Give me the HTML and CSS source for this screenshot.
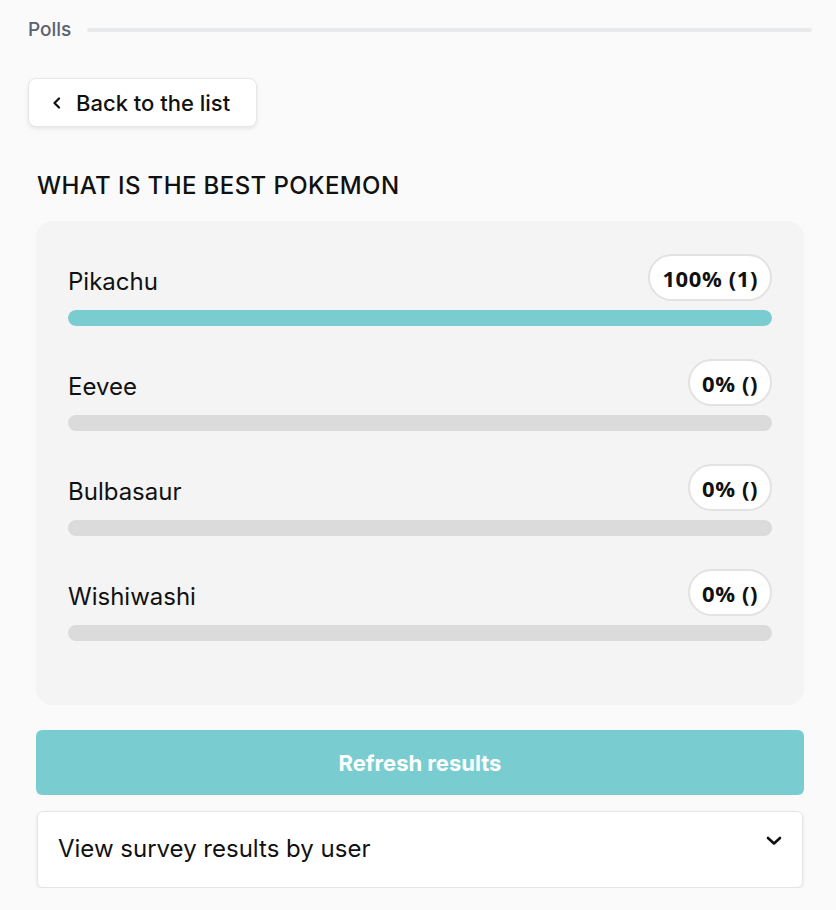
FILE: index.html
```html
<!DOCTYPE html>
<html lang="en">
<head>
    <meta charset="UTF-8">
    <meta name="viewport" content="width=device-width, initial-scale=1.0">
    <title>Polls</title>
    <link rel="stylesheet" href="styles.css">
</head>
<body>
    <div class="page">
        <div class="section-title">
            <span>Polls</span>
            <div class="rule"></div>
        </div>

        <button class="back-button">
            <svg width="10" height="12" viewBox="0 0 10 12"><path d="M7 1.5 L2.5 6 L7 10.5" fill="none" stroke="#111" stroke-width="2.2" stroke-linecap="round" stroke-linejoin="round"/></svg>
            Back to the list
        </button>

        <h1 class="poll-title">WHAT IS THE BEST POKEMON</h1>

        <div class="results-card">
            <div class="option">
                <div class="option-head">
                    <span class="option-name">Pikachu</span>
                    <span class="pill">100% (1)</span>
                </div>
                <div class="bar"><div class="bar-fill" style="width: 100%"></div></div>
            </div>
            <div class="option">
                <div class="option-head">
                    <span class="option-name">Eevee</span>
                    <span class="pill">0% ()</span>
                </div>
                <div class="bar"><div class="bar-fill" style="width: 0%"></div></div>
            </div>
            <div class="option">
                <div class="option-head">
                    <span class="option-name">Bulbasaur</span>
                    <span class="pill">0% ()</span>
                </div>
                <div class="bar"><div class="bar-fill" style="width: 0%"></div></div>
            </div>
            <div class="option">
                <div class="option-head">
                    <span class="option-name">Wishiwashi</span>
                    <span class="pill">0% ()</span>
                </div>
                <div class="bar"><div class="bar-fill" style="width: 0%"></div></div>
            </div>
        </div>

        <button class="refresh-button">Refresh results</button>

        <div class="user-results">
            <span>View survey results by user</span>
            <svg width="16" height="10" viewBox="0 0 16 10"><path d="M2 2 L8 7.5 L14 2" fill="none" stroke="#111" stroke-width="2.6" stroke-linecap="round" stroke-linejoin="round"/></svg>
        </div>
    </div>
</body>
</html>
```

FILE: styles.css
```css
* { margin: 0; padding: 0; box-sizing: border-box; }

body {
    font-family: Inter, "Noto Sans", sans-serif;
    background: #fafafa;
    color: #111;
}

.page {
    width: 836px;
    padding: 17px 24px 0 28px;
}

.section-title {
    display: flex;
    align-items: center;
    gap: 16px;
    height: 24px;
    color: #5b6270;
    font-size: 19px;
    font-weight: 500;
}

.rule {
    flex: 1;
    height: 4px;
    background: #e8e9eb;
    border-radius: 2px;
    margin-top: 2px;
}

.back-button {
    margin-top: 37px;
    height: 49px;
    width: 229px;
    display: flex;
    align-items: center;
    gap: 14px;
    padding-left: 23px;
    background: white;
    border: 1px solid #e6e6e6;
    border-radius: 8px;
    box-shadow: 0 2px 4px rgba(0,0,0,0.08);
    font-family: Inter, sans-serif;
    font-size: 22px;
    font-weight: 500;
    color: #111;
}

.poll-title {
    margin: 44px 0 0 9px;
    font-size: 24px;
    font-weight: 500;
    letter-spacing: 0.4px;
    line-height: 30px;
}

.results-card {
    margin: 20px 8px 0 8px;
    background: #f4f4f4;
    border-radius: 16px;
    padding: 33px 32px 31px;
}

.option { margin-bottom: 33px; }

.option-head {
    display: flex;
    justify-content: space-between;
    align-items: flex-end;
    margin-bottom: 9px;
}

.option-name {
    font-size: 24px;
    line-height: 30px;
    padding-bottom: 4px;
}

.pill {
    height: 47px;
    padding: 0 12px;
    display: flex;
    align-items: center;
    background: white;
    border: 2px solid #e2e2e2;
    border-radius: 24px;
    font-family: "Open Sans", sans-serif;
    font-size: 22px;
    font-weight: 700;
    letter-spacing: 0.6px;
}

.bar {
    height: 16px;
    background: #dbdbdb;
    border-radius: 8px;
    overflow: hidden;
}

.bar-fill {
    height: 100%;
    background: #79cdd0;
    border-radius: 8px;
}

.refresh-button {
    display: block;
    margin: 25px 8px 0 8px;
    width: 768px;
    height: 65px;
    background: #79cdd0;
    border: none;
    border-radius: 6px;
    color: white;
    font-family: Inter, sans-serif;
    font-size: 22px;
    font-weight: 700;
}

.user-results {
    margin: 16px 9px 0 9px;
    height: 77px;
    display: flex;
    justify-content: space-between;
    align-items: flex-start;
    padding: 22px 20px 0 20px;
    background: white;
    border: 1px solid #e5e5e5;
    border-radius: 6px;
    box-shadow: 0 2px 4px rgba(0,0,0,0.08);
    font-size: 24px;
    line-height: 30px;
}

.user-results svg { margin-top: 2px; }
```
